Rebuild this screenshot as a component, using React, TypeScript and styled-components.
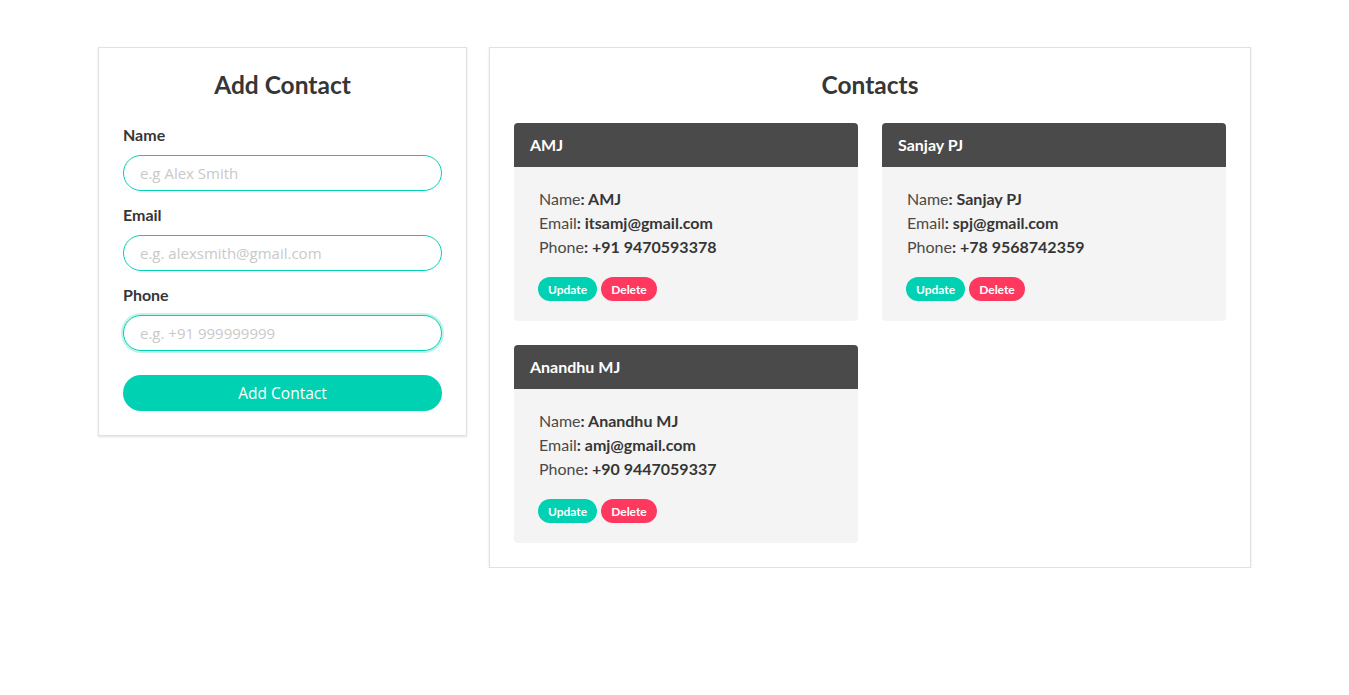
import React from 'react'
import styled, { createGlobalStyle } from 'styled-components'

const GlobalStyle = createGlobalStyle`
  body {
    margin: 0;
    background: #fff;
    font-family: Lato, "Noto Sans", sans-serif;
    color: #363636;
  }
  * { box-sizing: border-box; }
`

const contacts = [
  { name: 'AMJ', email: 'itsamj@gmail.com', phone: '+91 9470593378' },
  { name: 'Sanjay PJ', email: 'spj@gmail.com', phone: '+78 9568742359' },
  { name: 'Anandhu MJ', email: 'amj@gmail.com', phone: '+90 9447059337' },
]

const App = () => {
  return (
    <>
      <GlobalStyle />
      <Page>
        <Box>
          <Title>Add Contact</Title>
          <Field>
            <Label>Name</Label>
            <Input placeholder="e.g Alex Smith" />
          </Field>
          <Field>
            <Label>Email</Label>
            <Input placeholder="e.g. alexsmith@gmail.com" />
          </Field>
          <Field>
            <Label>Phone</Label>
            <Input placeholder="e.g. +91 999999999" focused autoFocus />
          </Field>
          <SubmitButton>Add Contact</SubmitButton>
        </Box>

        <Box>
          <Title>Contacts</Title>
          <CardGrid>
            {contacts.map((c) => (
              <Card key={c.name}>
                <CardHeader>{c.name}</CardHeader>
                <CardBody>
                  <Line>Name<b>: {c.name}</b></Line>
                  <Line>Email<b>: {c.email}</b></Line>
                  <Line>Phone<b>: {c.phone}</b></Line>
                  <Actions>
                    <Tag color="#00d1b2">Update</Tag>
                    <Tag color="#ff3860">Delete</Tag>
                  </Actions>
                </CardBody>
              </Card>
            ))}
          </CardGrid>
        </Box>
      </Page>
    </>
  )
}
export default App

const Page = styled.div`
  width: 1153px;
  margin: 47px auto 0;
  display: grid;
  grid-template-columns: 369px 762px;
  column-gap: 22px;
  align-items: start;
`

const Box = styled.div`
  background: #fff;
  border: 1px solid #e2e2e2;
  box-shadow: 0 1px 2px rgba(10, 10, 10, 0.12);
  padding: 24px;
`

const Title = styled.h2`
  margin: 0 0 25px;
  text-align: center;
  font-size: 24.5px;
  line-height: 26px;
  font-weight: 700;
  color: #363636;
`

const Field = styled.div`
  margin-bottom: 12px;
`

const Label = styled.label`
  display: block;
  font-size: 16px;
  line-height: 24px;
  font-weight: 700;
  margin-bottom: 8px;
`

const Input = styled.input<{ focused?: boolean }>`
  display: block;
  width: 100%;
  height: 36px;
  border: 1px solid #00d1b2;
  border-radius: 290486px;
  padding: 0 16px;
  font-family: "Open Sans", sans-serif;
  font-size: 15px;
  color: #363636;
  outline: none;
  box-shadow: ${(p) => (p.focused ? '0 0 0 2px rgba(0, 209, 178, 0.25)' : 'none')};
  &::placeholder {
    color: #c9c9c9;
  }
`

const SubmitButton = styled.button`
  display: block;
  width: 100%;
  height: 36px;
  margin-top: 24px;
  border: none;
  border-radius: 290486px;
  background: #00d1b2;
  color: #fff;
  font-family: "Open Sans", sans-serif;
  font-size: 15.5px;
  cursor: pointer;
`

const CardGrid = styled.div`
  display: grid;
  grid-template-columns: 1fr 1fr;
  gap: 24px;
`

const Card = styled.div`
  border-radius: 4px;
  overflow: hidden;
  background: #f4f4f4;
`

const CardHeader = styled.div`
  background: #4a4a4a;
  color: #fff;
  height: 44px;
  display: flex;
  align-items: center;
  padding: 0 16px 2px;
  font-size: 16px;
  font-weight: 700;
`

const CardBody = styled.div`
  padding: 20px 24px 20px 25px;
`

const Line = styled.div`
  font-size: 16px;
  line-height: 24px;
  color: #4a4a4a;
  b { font-weight: 700; color: #363636; }
`

const Actions = styled.div`
  display: flex;
  gap: 4px;
  margin-top: 18px;
  margin-left: -1px;
`

const Tag = styled.span<{ color: string }>`
  display: inline-flex;
  align-items: center;
  height: 24px;
  padding: 0 10px;
  border-radius: 290486px;
  background: ${(p) => p.color};
  color: #fff;
  font-size: 12px;
  font-weight: 700;
`
